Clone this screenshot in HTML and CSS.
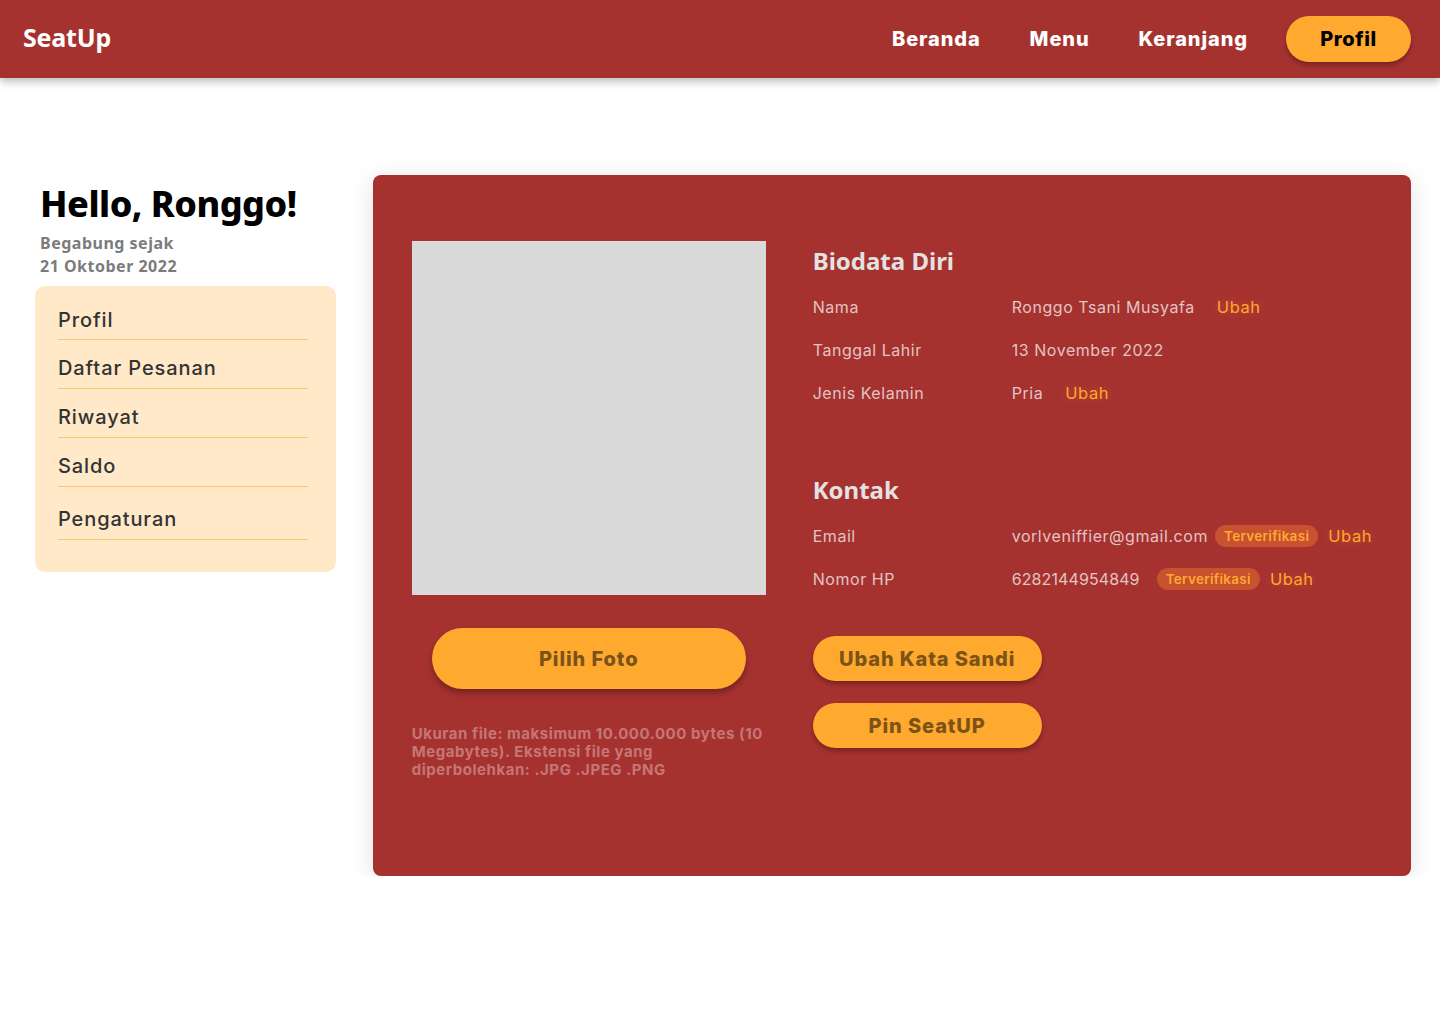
FILE: index.html
```html
<!DOCTYPE html>
<html lang="id">
<head>
<meta charset="utf-8">
<title>SeatUp - Profil</title>
<link rel="stylesheet" href="styles.css">
</head>
<body>
<header class="topbar">
  <div class="brand">SeatUp</div>
  <nav class="nav">
    <a class="nav-link" href="#">Beranda</a>
    <a class="nav-link" href="#">Menu</a>
    <a class="nav-link" href="#">Keranjang</a>
    <a class="nav-btn" href="#">Profil</a>
  </nav>
</header>

<main class="page">
  <aside class="side">
    <h1 class="hello">Hello, Ronggo!</h1>
    <p class="joined">Begabung sejak<br>21 Oktober 2022</p>
    <ul class="side-menu">
      <li class="side-item">Profil</li>
      <li class="side-item">Daftar Pesanan</li>
      <li class="side-item">Riwayat</li>
      <li class="side-item">Saldo</li>
      <li class="side-item side-item-last">Pengaturan</li>
    </ul>
  </aside>

  <section class="card">
    <div class="photo-col">
      <div class="photo"></div>
      <button class="btn btn-photo">Pilih Foto</button>
      <p class="note">Ukuran file: maksimum 10.000.000 bytes (10 Megabytes). Ekstensi file yang diperbolehkan: .JPG .JPEG .PNG</p>
    </div>
    <div class="info-col">
      <h2 class="sec-title">Biodata Diri</h2>
      <div class="row"><span class="label">Nama</span><span class="value">Ronggo Tsani Musyafa</span><span class="ubah ubah-wide">Ubah</span></div>
      <div class="row"><span class="label">Tanggal Lahir</span><span class="value">13 November 2022</span></div>
      <div class="row"><span class="label">Jenis Kelamin</span><span class="value">Pria</span><span class="ubah ubah-wide">Ubah</span></div>

      <h2 class="sec-title sec-kontak">Kontak</h2>
      <div class="row"><span class="label">Email</span><span class="value">vorlveniffier@gmail.com</span><span class="badge badge-tight">Terverifikasi</span><span class="ubah">Ubah</span></div>
      <div class="row"><span class="label">Nomor HP</span><span class="value value-num">6282144954849</span><span class="badge">Terverifikasi</span><span class="ubah">Ubah</span></div>

      <div class="actions">
        <button class="btn btn-small">Ubah Kata Sandi</button>
        <button class="btn btn-small">Pin SeatUP</button>
      </div>
    </div>
  </section>
</main>
</body>
</html>
```

FILE: styles.css
```css
* { box-sizing: border-box; }

body {
  margin: 0;
  background: #ffffff;
  font-family: "Noto Sans", "Open Sans", sans-serif;
  color: #222;
}

.topbar {
  height: 78px;
  background: #a63230;
  display: flex;
  align-items: center;
  justify-content: space-between;
  padding: 0 29px 0 23px;
  box-shadow: 0 4px 8px rgba(0, 0, 0, 0.25);
  position: relative;
}

.brand {
  font-family: "Noto Sans", sans-serif;
  font-weight: 700;
  font-size: 25px;
  line-height: 30px;
  margin-bottom: 4px;
  color: #ffffff;
  letter-spacing: -0.2px;
}

.nav {
  display: flex;
  align-items: center;
}

.nav-link {
  font-family: "Inter", sans-serif;
  font-weight: 800;
  font-size: 20px;
  color: #ffffff;
  text-decoration: none;
  margin-right: 49px;
  letter-spacing: 0.9px;
}

.nav-link:nth-child(3) { margin-right: 38px; }

.nav-btn {
  width: 125px;
  height: 46px;
  border-radius: 23px;
  background: #ffa92f;
  color: #000;
  font-family: "Inter", sans-serif;
  font-weight: 800;
  font-size: 20px;
  text-decoration: none;
  display: flex;
  align-items: center;
  justify-content: center;
  box-shadow: 0 3px 5px rgba(0, 0, 0, 0.3);
  letter-spacing: 0.6px;
}

.page {
  display: flex;
  align-items: flex-start;
  padding: 97px 29px 0 35px;
}

.side {
  width: 301px;
  margin-right: 37px;
  margin-top: 5px;
}

.hello {
  margin: 0 0 0 5px;
  font-family: "Noto Sans", sans-serif;
  font-weight: 800;
  font-size: 36px;
  line-height: 48px;
  color: #000;
  letter-spacing: -0.5px;
}

.joined {
  margin: 4px 0 8px 5px;
  font-family: "Noto Sans", sans-serif;
  font-weight: 700;
  font-size: 16px;
  line-height: 23px;
  color: #7b7b7b;
  letter-spacing: 0.5px;
}

.side-menu {
  list-style: none;
  margin: 0;
  padding: 7px 28px 32px 23px;
  background: #ffe9c9;
  border-radius: 10px;
}

.side-item {
  font-family: "Inter", sans-serif;
  font-weight: 500;
  font-size: 20px;
  color: #333333;
  height: 49px;
  display: flex;
  align-items: center;
  padding-top: 7px;
  border-bottom: 1px solid #f7c873;
  letter-spacing: 0.9px;
}

.side-item:first-child { height: 47px; }

.side-item-last { height: 53px; padding-top: 12px; }

.card {
  flex: 1;
  height: 701px;
  background: #a63230;
  border-radius: 8px;
  box-shadow: 0 4px 24px rgba(0, 0, 0, 0.12);
  display: flex;
  padding: 66px 39px 0 39px;
}

.photo-col {
  width: 354px;
  margin-right: 47px;
}

.photo {
  width: 354px;
  height: 354px;
  background: #d9d9d9;
}

.btn {
  border: none;
  background: #ffa92f;
  color: #7b5317;
  font-family: "Inter", sans-serif;
  font-weight: 800;
  border-radius: 999px;
  cursor: pointer;
  letter-spacing: 0.9px;
}

.btn-photo {
  display: block;
  width: 314px;
  height: 61px;
  margin: 33px 0 0 20px;
  font-size: 20px;
  box-shadow: 0 4px 6px rgba(0, 0, 0, 0.3);
}

.note {
  margin: 36px 0 0;
  font-family: "Inter", sans-serif;
  font-weight: 700;
  font-size: 15px;
  line-height: 18px;
  color: #c57774;
  letter-spacing: 0.55px;
}

.info-col {
  flex: 1;
  display: flex;
  flex-direction: column;
  align-items: flex-start;
}

.sec-title {
  margin: 0 0 6px;
  height: 38px;
  display: flex;
  align-items: center;
  font-family: "Noto Sans", sans-serif;
  font-weight: 700;
  font-size: 24px;
  color: #e3e1e1;
}

.sec-kontak { margin-top: 56px; }

.row {
  height: 43px;
  display: flex;
  align-items: center;
  font-family: "Inter", sans-serif;
  font-size: 16px;
  color: #e2c4c3;
  letter-spacing: 0.55px;
}

.label { width: 199px; }

.value-num { letter-spacing: 0.1px; }

.ubah {
  color: #ffa92f;
  margin-left: 10px;
  font-size: 16.5px;
  text-shadow: 0 0 8px rgba(255, 140, 40, 0.35);
}

.ubah-wide { margin-left: 22px; }

.badge {
  margin-left: 17px;
  background: #c8512f;
  color: #ffa92f;
  font-size: 13.5px;
  font-weight: 600;
  letter-spacing: 0.3px;
  padding: 3px 9px;
  border-radius: 11px;
  height: 22px;
  display: flex;
  align-items: center;
}

.badge-tight { margin-left: 7px; }

.actions {
  display: flex;
  flex-direction: column;
  gap: 22px;
  margin-top: 36px;
}

.btn-small {
  width: 229px;
  height: 45px;
  font-size: 20px;
  box-shadow: 0 3px 5px rgba(0, 0, 0, 0.3);
}
```
